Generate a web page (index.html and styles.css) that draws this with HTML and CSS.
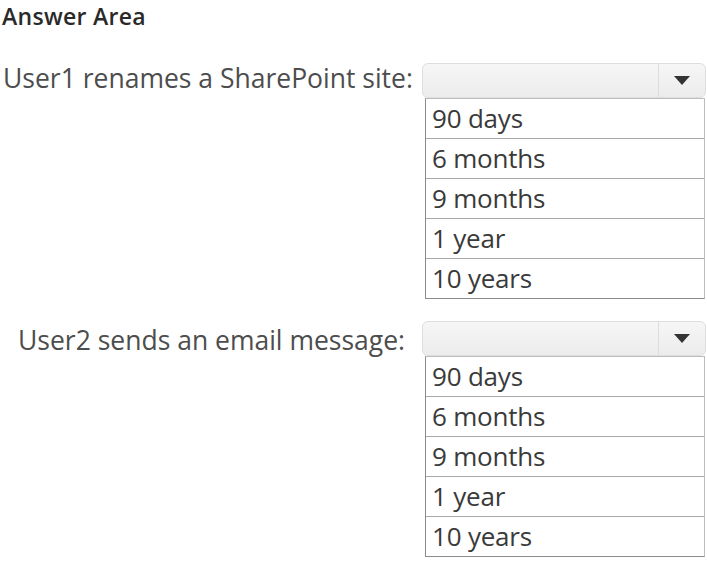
FILE: index.html
```html
<!DOCTYPE html>
<html lang="en">
<head>
  <meta charset="UTF-8" />
  <title>Answer Area</title>
  <link rel="stylesheet" href="styles.css">
</head>
<body>

<h1 class="title">Answer Area</h1>

<div class="question">
  <div class="question-label first">User1 renames a SharePoint site:</div>
  <div class="dropdown">
    <div class="select">
      <div class="select-value"></div>
      <div class="select-arrow"><span class="tri"></span></div>
    </div>
    <ul class="options">
      <li>90 days</li>
      <li>6 months</li>
      <li>9 months</li>
      <li>1 year</li>
      <li>10 years</li>
    </ul>
  </div>
</div>

<div class="question second-q">
  <div class="question-label second">User2 sends an email message:</div>
  <div class="dropdown">
    <div class="select">
      <div class="select-value"></div>
      <div class="select-arrow"><span class="tri"></span></div>
    </div>
    <ul class="options">
      <li>90 days</li>
      <li>6 months</li>
      <li>9 months</li>
      <li>1 year</li>
      <li>10 years</li>
    </ul>
  </div>
</div>

</body>
</html>
```

FILE: styles.css
```css
html, body {
  margin: 0;
  padding: 0;
  background: #fff;
  font-family: "Open Sans", "Noto Sans", sans-serif;
  color: #444;
}
.title {
  margin: 0;
  padding: 0 0 0 2px;
  height: 32px;
  line-height: 32px;
  font-size: 23px;
  font-weight: 600;
  color: #2a2a2a;
  letter-spacing: 0.3px;
}
.question {
  display: flex;
  align-items: flex-start;
  margin-top: 31px;
}
.second-q {
  margin-top: 22px;
}
.question-label {
  width: 422px;
  box-sizing: border-box;
  font-size: 26.5px;
  line-height: 35px;
  color: #4d4d4d;
  white-space: nowrap;
}
.question-label.first {
  padding-left: 3px;
  margin-top: -2px;
}
.question-label.second {
  padding-left: 18px;
  margin-top: 2px;
}
.dropdown {
  width: 284px;
}
.select {
  display: flex;
  height: 35px;
  box-sizing: border-box;
  border: 1px solid #dedede;
  border-radius: 6px;
  background: linear-gradient(#f6f6f6, #ececec);
}
.select-value {
  flex: 1;
}
.select-arrow {
  width: 46px;
  border-left: 1px solid #dcdcdc;
  display: flex;
  align-items: center;
  justify-content: center;
}
.tri {
  width: 0;
  height: 0;
  border-left: 8px solid transparent;
  border-right: 8px solid transparent;
  border-top: 9px solid #333;
}
.options {
  list-style: none;
  margin: 0 1px 0 3px;
  padding: 0;
  border: 1px solid #8c8c8c;
  border-top-color: #bdbdbd;
  border-right-color: #bdbdbd;
  background: #fff;
}
.options li {
  height: 39px;
  line-height: 39px;
  padding-left: 6px;
  font-size: 26px;
  color: #3a3a3a;
  border-bottom: 1px solid #a8a8a8;
  letter-spacing: -0.2px;
}
.options li:last-child {
  border-bottom: none;
}
```
